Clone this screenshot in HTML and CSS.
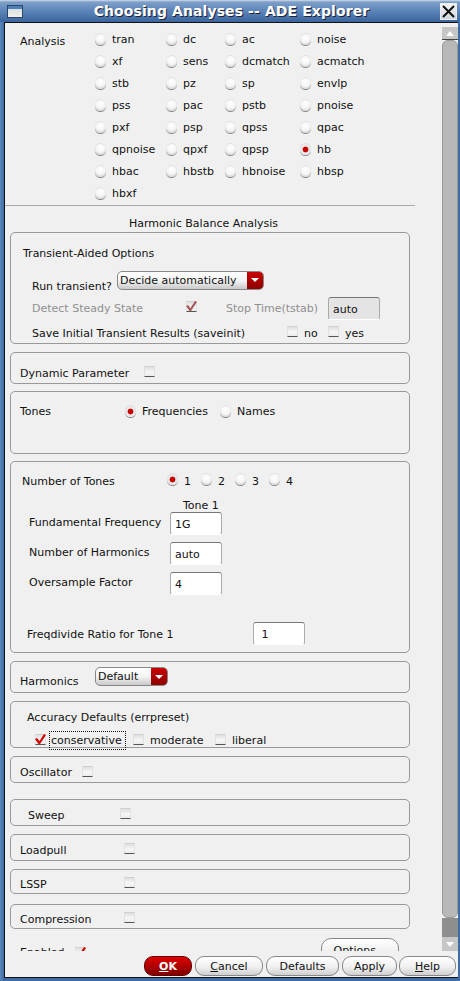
FILE: index.html
```html
<!DOCTYPE html>
<html>
<head>
<meta charset="utf-8">
<title>Choosing Analyses -- ADE Explorer</title>
<link rel="stylesheet" href="styles.css">
</head>
<body>
<div class="window">
  <div class="titlebar">
    <span class="win-icon"><span class="win-icon-inner"></span></span>
    <span class="title">Choosing Analyses -- ADE Explorer</span>
    <span class="close"><svg width="15" height="15" viewBox="0 0 15 15"><path d="M2 2 L13 13 M13 2 L2 13" stroke="#111" stroke-width="2" fill="none"/></svg></span>
  </div>
  <div class="client">
    <div class="main">
      <div class="content">
        <div class="analysis">
          <div class="analysis-label">Analysis</div>
          <div class="analysis-grid">
            <label class="opt"><i class="radio"></i>tran</label><label class="opt"><i class="radio"></i>dc</label><label class="opt"><i class="radio"></i>ac</label><label class="opt"><i class="radio"></i>noise</label>
            <label class="opt"><i class="radio"></i>xf</label><label class="opt"><i class="radio"></i>sens</label><label class="opt"><i class="radio"></i>dcmatch</label><label class="opt"><i class="radio"></i>acmatch</label>
            <label class="opt"><i class="radio"></i>stb</label><label class="opt"><i class="radio"></i>pz</label><label class="opt"><i class="radio"></i>sp</label><label class="opt"><i class="radio"></i>envlp</label>
            <label class="opt"><i class="radio"></i>pss</label><label class="opt"><i class="radio"></i>pac</label><label class="opt"><i class="radio"></i>pstb</label><label class="opt"><i class="radio"></i>pnoise</label>
            <label class="opt"><i class="radio"></i>pxf</label><label class="opt"><i class="radio"></i>psp</label><label class="opt"><i class="radio"></i>qpss</label><label class="opt"><i class="radio"></i>qpac</label>
            <label class="opt"><i class="radio"></i>qpnoise</label><label class="opt"><i class="radio"></i>qpxf</label><label class="opt"><i class="radio"></i>qpsp</label><label class="opt"><i class="radio on"></i>hb</label>
            <label class="opt"><i class="radio"></i>hbac</label><label class="opt"><i class="radio"></i>hbstb</label><label class="opt"><i class="radio"></i>hbnoise</label><label class="opt"><i class="radio"></i>hbsp</label>
            <label class="opt"><i class="radio"></i>hbxf</label>
          </div>
        </div>
        <div class="separator"></div>
        <div class="heading">Harmonic Balance Analysis</div>

        <section class="panel p-transient">
          <div class="row r-ta">Transient-Aided Options</div>
          <div class="row r-run">
            <span class="run-label">Run transient?</span>
            <span class="combo combo-wide"><span class="combo-text">Decide automatically</span><span class="combo-arrow"></span></span>
          </div>
          <div class="row r-detect dim">
            <span class="detect-label">Detect Steady State</span>
            <i class="check dimcheck"><svg width="11" height="11" viewBox="0 0 11 11"><path d="M0 5 L2 4 L4.5 7 L9 0 L11 1 L5 10 L3.5 10 Z" fill="#a85c5c"/></svg></i>
            <span class="stop-label">Stop Time(tstab)</span>
            <span class="field field-dim">auto</span>
          </div>
          <div class="row r-save">
            <span class="save-label">Save Initial Transient Results (saveinit)</span>
            <i class="check"></i><span class="no-label">no</span>
            <i class="check"></i><span class="yes-label">yes</span>
          </div>
        </section>

        <section class="panel p-dyn">
          <span class="dyn-label">Dynamic Parameter</span><i class="check"></i>
        </section>

        <section class="panel p-tones">
          <span class="tones-label">Tones</span>
          <i class="radio on"></i><span class="freq-label">Frequencies</span>
          <i class="radio"></i><span class="names-label">Names</span>
        </section>

        <section class="panel p-num">
          <div class="row r-num">
            <span class="num-label">Number of Tones</span>
            <i class="radio on"></i><span class="n-label">1</span>
            <i class="radio"></i><span class="n-label">2</span>
            <i class="radio"></i><span class="n-label">3</span>
            <i class="radio"></i><span class="n-label">4</span>
          </div>
          <div class="row r-tone">Tone 1</div>
          <div class="row r-field"><span class="field-label">Fundamental Frequency</span><span class="field">1G</span></div>
          <div class="row r-field"><span class="field-label">Number of Harmonics</span><span class="field">auto</span></div>
          <div class="row r-field"><span class="field-label">Oversample Factor</span><span class="field">4</span></div>
          <div class="row r-div"><span class="div-label">Freqdivide Ratio for Tone 1</span><span class="field"> 1</span></div>
        </section>

        <section class="panel p-harm">
          <span class="harm-label">Harmonics</span>
          <span class="combo combo-small"><span class="combo-text">Default</span><span class="combo-arrow"></span></span>
        </section>

        <section class="panel p-acc">
          <div class="row r-acc">Accuracy Defaults (errpreset)</div>
          <div class="row r-accopts">
            <i class="check"><svg width="11" height="11" viewBox="0 0 11 11"><path d="M0 5 L2 4 L4.5 7 L9 0 L11 1 L5 10 L3.5 10 Z" fill="#d40000"/></svg></i>
            <span class="focus">conservative</span>
            <i class="check check-mod"></i><span class="mod-label">moderate</span>
            <i class="check"></i><span class="lib-label">liberal</span>
          </div>
        </section>

        <section class="panel p-simple p-osc"><span class="osc-label">Oscillator</span><i class="check"></i></section>
        <section class="panel p-simple p-sweep"><span class="sweep-label">Sweep</span><i class="check"></i></section>
        <section class="panel p-simple p-load"><span class="load-label">Loadpull</span><i class="check"></i></section>
        <section class="panel p-simple p-lssp"><span class="load-label">LSSP</span><i class="check"></i></section>
        <section class="panel p-simple p-comp"><span class="load-label">Compression</span><i class="check"></i></section>

        <div class="enabled-row">
          <span class="enabled-label">Enabled</span>
          <i class="check"><svg width="11" height="11" viewBox="0 0 11 11"><path d="M0 5 L2 4 L4.5 7 L9 0 L11 1 L5 10 L3.5 10 Z" fill="#d40000"/></svg></i>
          <span class="btn options">Options...</span>
        </div>
      </div>
      <div class="scrollbar">
        <div class="sb-btn sb-up"><span class="tri-up"></span></div>
        <div class="sb-thumb"></div>
        <div class="sb-track"></div>
        <div class="sb-btn sb-down"><span class="tri-down"></span></div>
      </div>
    </div>
    <div class="buttons">
      <span class="btn btn-ok"><u>O</u>K</span>
      <span class="btn btn-cancel"><u>C</u>ancel</span>
      <span class="btn btn-def">Defaults</span>
      <span class="btn btn-apply">Apply</span>
      <span class="btn btn-help"><u>H</u>elp</span>
    </div>
  </div>
</div>
</body>
</html>
```
FILE: styles.css
```css
html, body { margin: 0; padding: 0; background: #3f6ca6; }
body { width: 460px; height: 981px; overflow: hidden; font-family: "DejaVu Sans", sans-serif; font-size: 11px; color: #111; }
i { display: block; font-style: normal; flex: none; }
.window { width: 460px; height: 981px; display: flex; flex-direction: column; background: linear-gradient(90deg, #5c86bb 0, #3f6ca6 4px); box-sizing: border-box; padding: 0 2px 3px 4px; }

.titlebar { height: 22px; margin: 0 -2px 0 -4px; flex: none; display: flex; align-items: center; background: linear-gradient(#cfdcec 0, #7f9fc8 2px, #5f87ba 10px, #3a659f 22px); }
.win-icon { width: 14px; height: 11px; margin-left: 7px; border: 1px solid #2c4566; background: #4f7fb8; display: block; flex: none; }
.win-icon-inner { display: block; margin: 3px 0 0 0; height: 8px; background: linear-gradient(#d6e0e0, #f0f0e8); }
.title { flex: 1; text-align: center; font-weight: bold; font-size: 14px; color: #fff; text-shadow: 1px 1px 0 #223; letter-spacing: 0.1px; }
.close { width: 15px; height: 15px; margin-right: 3px; background: linear-gradient(#f4f4f4, #cfd6de); border: 1px solid #e8eef4; display: block; flex: none; }

.client { flex: 1; min-height: 0; background: #f0f0f0; border: 1px solid #111; border-right: none; display: flex; flex-direction: column; }
.main { height: 928px; flex: none; display: flex; overflow: hidden; }
.content { width: 437px; flex: none; padding: 5px 0 0 5px; box-sizing: border-box; overflow: hidden; }

.analysis { display: flex; height: 176px; }
.analysis-label { width: 85px; padding: 3px 0 0 10px; box-sizing: border-box; line-height: 22px; flex: none; }
.analysis-grid { display: grid; grid-template-columns: 71px 59px 75px 100px; grid-auto-rows: 22px; padding-top: 1px; }
.opt { display: flex; align-items: center; gap: 6px; line-height: 22px; }
.analysis-grid .radio { margin-top: -2px; }

.radio { width: 11px; height: 11px; border-radius: 50%; background: radial-gradient(circle at 50% 35%, #fff 0, #f4f4f4 50%, #c4c4c4 92%); box-shadow: 0 1px 0 #888, 0 -1px 0 #e0e0e0; }
.radio.on { background: radial-gradient(circle at 50% 50%, #d00000 0, #c00000 32%, #f0e8e8 42%, #e4e4e4 70%, #b8b8b8 95%); }
.check { width: 11px; height: 11px; background: linear-gradient(#dedede, #f6f6f6 55%, #ececec); border: 1px solid #e2e2e2; border-top-color: #d0d0d0; border-bottom-color: #555; box-sizing: border-box; line-height: 0; overflow: visible; }
.check svg { margin: -1px 0 0 -1px; }

.separator { height: 1px; width: 410px; margin-left: -5px; margin-top: 1px; background: #aaa; }
.heading { text-align: center; width: 387px; height: 26px; line-height: 36px; }

.panel { width: 400px; box-sizing: border-box; border: 1px solid #999; border-radius: 5px; }
.row { display: flex; align-items: center; }

.p-transient { height: 112px; }
.r-ta { height: 20px; margin: 10px 0 0 12px; }
.r-run { height: 24px; margin-top: 8px; padding-left: 21px; }
.run-label { width: 85px; padding-top: 6px; flex: none; }
.combo { height: 19px; box-sizing: border-box; border: 1px solid #888; border-radius: 5px; display: flex; background: linear-gradient(#fff, #f4f4f4 50%, #c8c8c8); overflow: hidden; flex: none; }
.combo-text { flex: 1; line-height: 18px; padding-left: 2px; }
.combo-arrow { width: 16px; background: linear-gradient(#c90000, #8e0000); display: flex; align-items: center; justify-content: center; }
.combo-arrow::after { content: ""; border-left: 4px solid transparent; border-right: 4px solid transparent; border-top: 4px solid #fff; }
.combo-wide { width: 147px; margin-bottom: 6px; }
.combo-small { width: 73px; margin-left: 6px; margin-top: -9px; }
.r-detect { height: 24px; margin-top: 1px; padding-left: 21px; }
.dim { color: #8f8f8f; }
.detect-label { width: 154px; flex: none; }
.dimcheck { margin-top: -3px; }
.stop-label { width: 102px; margin-left: 29px; flex: none; }
.field { width: 52px; height: 23px; box-sizing: border-box; border: 1px solid #aaa; border-top-color: #777; border-bottom-color: #fff; border-radius: 3px; background: #fff; line-height: 24px; padding-left: 4px; flex: none; color: #111; white-space: pre; }
.field-dim { background: #e4e4e4; }
.r-save { height: 24px; margin-top: 1px; padding-left: 21px; }
.save-label { width: 255px; flex: none; }
.r-save .check { margin-top: -4px; }
.no-label { margin-left: 6px; width: 24px; flex: none; }
.yes-label { margin-left: 6px; }

.p-dyn { height: 32px; margin-top: 8px; display: flex; align-items: center; padding: 10px 0 0 9px; }
.dyn-label { width: 124px; flex: none; }
.p-dyn .check { margin-top: -3px; }

.p-tones { height: 63px; margin-top: 7px; display: flex; align-items: flex-start; padding: 13px 0 0 9px; }
.tones-label { width: 105px; flex: none; line-height: 13px; }
.p-tones .radio { margin-top: 1px; }
.freq-label { width: 78px; margin-left: 6px; flex: none; line-height: 13px; }
.names-label { margin-left: 6px; line-height: 13px; }

.p-num { height: 192px; margin-top: 7px; }
.r-num { height: 20px; margin-top: 9px; padding-left: 11px; }
.num-label { width: 145px; flex: none; }
.r-num .radio { margin-top: -3px; }
.n-label { width: 17px; margin-left: 6px; flex: none; }
.r-tone { height: 9px; margin-top: 8px; padding-left: 172px; align-items: flex-start; line-height: 13px; }
.r-field { height: 30px; padding-left: 18px; }
.field-label { width: 141px; flex: none; margin-top: -2px; }
.r-div { height: 30px; margin-top: 20px; padding-left: 16px; }
.div-label { width: 226px; flex: none; margin-top: 2px; }

.p-harm { height: 32px; margin-top: 8px; display: flex; align-items: center; padding: 8px 0 0 9px; }
.harm-label { width: 69px; flex: none; }

.p-acc { height: 47px; margin-top: 8px; }
.r-acc { height: 16px; margin-top: 7px; padding-left: 16px; }
.r-accopts { height: 19px; margin-top: 6px; padding-left: 24px; }
.r-accopts .check { margin-top: -3px; }
.focus { border: 1px dotted #111; margin-left: 3px; padding: 0 1px; line-height: 17px; width: 73px; flex: none; white-space: nowrap; }
.check-mod { margin-left: 7px; }
.mod-label { margin-left: 6px; width: 65px; flex: none; }
.lib-label { margin-left: 6px; }

.p-simple { display: flex; align-items: center; padding: 5px 0 0 9px; }
.p-simple .check { margin-top: -3px; }
.p-osc { height: 27px; margin-top: 8px; padding-top: 6px; }
.osc-label { width: 62px; flex: none; }
.p-sweep { height: 27px; margin-top: 16px; }
.sweep-label { width: 100px; padding-left: 8px; box-sizing: border-box; flex: none; }
.p-load { height: 27px; margin-top: 8px; }
.load-label { width: 104px; flex: none; }
.p-lssp { height: 25px; margin-top: 8px; }
.p-comp { height: 25px; margin-top: 10px; }

.enabled-row { height: 30px; display: flex; align-items: flex-start; padding: 9px 0 0 10px; }
.enabled-label { width: 55px; flex: none; line-height: 13px; padding-top: 8px; }
.enabled-row .check { margin-top: 9px; }
.btn { display: block; box-sizing: border-box; text-align: center; border: 1px solid #888; border-radius: 9px; background: linear-gradient(#fff, #f0f0f0 55%, #cfcfcf); flex: none; height: 20px; line-height: 19px; }
.options { width: 78px; margin-left: 235px; height: 24px; border-radius: 10px; line-height: 24px; }

.scrollbar { flex: 1; display: flex; flex-direction: column; background: #f0f0f0; padding-top: 4px; }
.sb-btn { height: 14px; background: #c6c6c6; display: flex; align-items: center; justify-content: center; flex: none; }
.sb-up { height: 13px; border-bottom: 1px solid #444; box-sizing: border-box; }
.tri-up { border-left: 4px solid transparent; border-right: 4px solid transparent; border-bottom: 5px solid #fff; }
.tri-down { border-left: 4px solid transparent; border-right: 4px solid transparent; border-top: 5px solid #fff; }
.sb-thumb { height: 878px; flex: none; background: #b8b8b8; border: 1px solid #999; border-radius: 6px; box-sizing: border-box; }
.sb-track { flex: 1; background: #8e8e8e; }

.buttons { flex: 1; display: flex; gap: 3px; padding: 5px 0 0 139px; align-items: flex-start; }
.btn-ok { width: 48px; background: linear-gradient(#e00000, #b00000 50%, #7e0000); color: #fff; font-weight: bold; border-color: #600; }
.btn-cancel { width: 68px; }
.btn-def { width: 73px; }
.btn-apply { width: 55px; margin-right: -1px; }
.btn-help { width: 57px; }
```
